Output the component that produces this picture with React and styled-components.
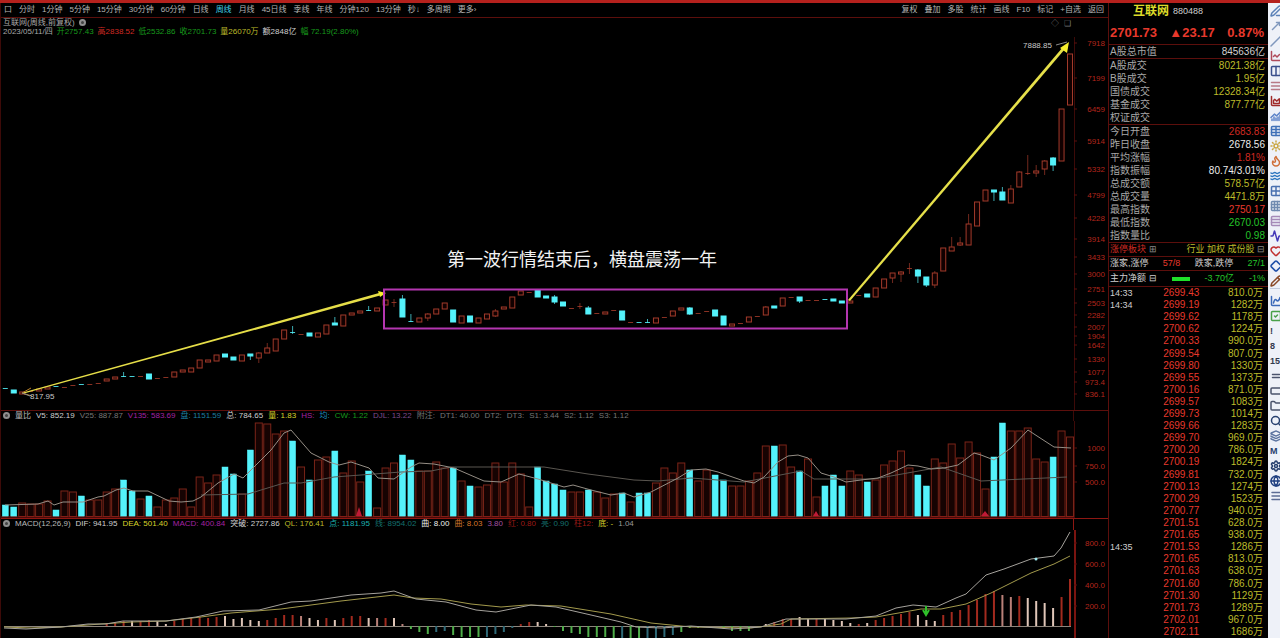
import styled, { createGlobalStyle } from "styled-components";
import {
  PenLine,
  MoveUpRight,
  Slash,
  ChartLine,
  Columns2,
  AlignJustify,
  ChartArea,
  ChartNoAxesCombined,
  Table,
  Sun,
  Flame,
  Waves,
  Grid2x2,
  Grid3x3,
  Rows3,
  Activity,
  Heart,
  Diamond,
  Pencil,
  ChartSpline,
  SquareCheck,
  Equal,
  RectangleHorizontal,
  Folder,
  Search,
  Layers,
  Settings,
  Globe,
  Menu,
} from "lucide-react";

const GlobalStyle = createGlobalStyle`
  * {
    box-sizing: border-box;
  }

  body {
    margin: 0;
    background-color: #000;
    font-family: "Liberation Sans", "Noto Sans CJK SC", sans-serif;
  }

  button {
    margin: 0;
    padding: 0;
    border: 0;
    background: none;
    font-family: inherit;
    cursor: pointer;
  }
`;

const RED = "#e8392c";
const GREEN = "#25c52a";
const YELLOW = "#bdbb2a";
const WHITE = "#cfcfcf";
const CYAN = "#54f2fb";
const BORDER = "#5c0f0c";

const Page = styled.div`
  display: grid;
  grid-template-columns: minmax(0, 1fr) 160px 12px;
  min-height: 100vh;
  background-color: #000;
  border-top: 3px solid #b5211d;
`;

const Main = styled.main`
  display: flex;
  flex-direction: column;
  min-width: 0;
  border-left: 1px solid #3d0a08;
`;

const Toolbar = styled.nav`
  display: flex;
  justify-content: space-between;
  height: 15px;
  padding: 0 4px 0 3px;
  border-bottom: 1px solid ${BORDER};
`;

const ToolGroup = styled.div`
  display: flex;
  align-items: center;
  gap: 7px;
`;

const ToolButton = styled.button`
  color: ${(props) => (props.$active ? "#3fd0ea" : "#b4b4b4")};
  font-size: 8px;
  line-height: 12px;
  white-space: nowrap;
`;

const Heading = styled.header`
  display: flex;
  justify-content: space-between;
  height: 19px;
  padding: 0 4px 0 2px;
`;

const HeadingText = styled.div`
  display: flex;
  flex-direction: column;
`;

const HeadingIcons = styled.div`
  display: flex;
  gap: 5px;
  padding: 1px 33px 0 0;
  color: #777;
  font-size: 8px;
  line-height: 9px;
`;

const InfoLine = styled.div`
  display: flex;
  align-items: center;
  gap: ${(props) => props.$gap || 4}px;
  height: 9px;
  font-size: 8px;
  line-height: 9px;
  white-space: nowrap;
`;

const Field = styled.span`
  color: ${(props) => props.$color || WHITE};
`;

const Dot = styled.span`
  width: 7px;
  height: 7px;
  border: 2px solid #8f8f8f;
  border-radius: 50%;
  background-color: #444;
`;

const PaneHeader = styled.div`
  display: grid;
  grid-template-columns: minmax(0, 1fr) 35px;
  height: ${(props) => (props.$strong ? 12 : 11)}px;
  border-top: 1px solid ${(props) => (props.$strong ? "#8e1712" : BORDER)};
`;

const PaneAxis = styled.div`
  border-left: 1px solid ${(props) => (props.$strong ? "#8e1712" : "#3d0a08")};
`;

const PaneInfo = styled(InfoLine)`
  padding-left: 2px;
  overflow: hidden;
`;

const Chart = styled.svg`
  display: block;
  width: 100%;
  height: auto;
`;

const AxisText = styled.text`
  fill: #b3261c;
  font-size: 8px;
  text-anchor: end;
`;

const MarkText = styled.text`
  fill: #c9c9c9;
  font-size: 8px;
`;

const NoteText = styled.text`
  fill: #f2f2f2;
  font-size: 18px;
`;

const Quote = styled.aside`
  display: flex;
  flex-direction: column;
  border-left: 1px solid ${BORDER};
`;

const QuoteTitle = styled.h1`
  display: flex;
  align-items: center;
  gap: 4px;
  height: 17px;
  margin: 0;
  padding-left: 24px;
  font-size: 12px;
  line-height: 17px;
  color: #dedb2a;
`;

const QuoteCode = styled.span`
  font-size: 9px;
  font-weight: normal;
  color: ${WHITE};
`;

const PriceRow = styled.div`
  display: flex;
  align-items: center;
  justify-content: space-between;
  height: 24px;
  padding: 0 4px 0 1px;
  font-size: 13px;
  font-weight: bold;
  color: ${RED};
`;

const StatList = styled.dl`
  margin: 0;
  border-top: 1px solid ${BORDER};
`;

const StatRow = styled.div`
  display: flex;
  align-items: center;
  justify-content: space-between;
  height: 13px;
  padding: 0 3px 0 1px;
  font-size: 10px;
  line-height: 13px;
  white-space: nowrap;
`;

const StatLabel = styled.dt`
  color: #a8a8a8;
`;

const StatValue = styled.dd`
  margin: 0;
  color: ${(props) => props.$color};
`;

const BandRow = styled.div`
  display: flex;
  align-items: center;
  justify-content: space-between;
  height: ${(props) => props.$height || 14}px;
  padding: 0 3px 0 1px;
  border-top: 1px solid ${BORDER};
  font-size: 9px;
  line-height: 13px;
  white-space: nowrap;
`;

const FlowBar = styled.span`
  width: 18px;
  height: 4px;
  background-color: #1fe02a;
`;

const TickTable = styled.table`
  flex: 1;
  display: grid;
  border-top: 1px solid ${BORDER};
`;

const TickBody = styled.tbody`
  display: grid;
  grid-auto-rows: 1fr;
`;

const TickRow = styled.tr`
  display: grid;
  grid-template-columns: 44px 1fr 1fr;
  align-items: center;
  padding: 0 5px 0 1px;
  font-size: 10px;
  line-height: 12px;
`;

const TickCell = styled.td`
  padding: 0;
  color: ${(props) => props.$color};
  text-align: ${(props) => props.$align || "left"};
`;

const TickTime = styled(TickCell)`
  font-size: 9px;
`;

const SideBar = styled.nav`
  display: flex;
  flex-direction: column;
  padding-left: 2px;
  background-color: #eef1f8;
  overflow: hidden;
`;

const SideButton = styled.button`
  display: flex;
  align-items: center;
  flex-shrink: 0;
  width: 14px;
  height: 15px;
  color: ${(props) => props.$color};
  font-size: 9px;
  font-weight: bold;
`;

const SideDivider = styled.hr`
  width: 100%;
  height: 5px;
  margin: 0;
  border: 0;
  border-top: 1px solid #c3cbdc;
`;

const periods = [
  "口", "分时", "1分钟", "5分钟", "15分钟", "30分钟", "60分钟", "日线", "周线",
  "月线", "45日线", "季线", "年线", "分钟120", "13分钟", "秒↓", "多周期", "更多›",
];

const tools = ["复权", "叠加", "多股", "统计", "画线", "F10", "标记", "+自选", "返回"];

const ohlc = [
  ["2023/05/11/四", "#a8a8a8"],
  ["开2757.43", "#179a1c"],
  ["高2838.52", "#cf2a22"],
  ["低2532.86", "#179a1c"],
  ["收2701.73", "#179a1c"],
  ["量26070万", YELLOW],
  ["额2848亿", WHITE],
  ["幅 72.19(2.80%)", "#179a1c"],
];

const volumeInfo = [
  ["量比", "#b8b8b8"],
  ["V5: 852.19", WHITE],
  ["V25: 887.87", "#777"],
  ["V135: 583.69", "#a322a3"],
  ["盘: 1151.59", "#1c7fa0"],
  ["总: 784.65", WHITE],
  ["量: 1.83", "#d6d32a"],
  ["HS:", "#a322a3"],
  ["均:", "#1c8fc0"],
  ["CW: 1.22", "#179a1c"],
  ["DJL: 13.22", "#7d4a8a"],
  ["附注:", "#777"],
  ["DT1: 40.00", "#777"],
  ["DT2:", "#777"],
  ["DT3:", "#777"],
  ["S1: 3.44", "#777"],
  ["S2: 1.12", "#777"],
  ["S3: 1.12", "#777"],
];

const macdInfo = [
  ["MACD(12,26,9)", "#b8b8b8"],
  ["DIF: 941.95", WHITE],
  ["DEA: 501.40", "#d6d32a"],
  ["MACD: 400.84", "#a322a3"],
  ["突破: 2727.86", WHITE],
  ["QL: 176.41", YELLOW],
  ["点: 1181.95", "#1bb2b2"],
  ["线: 8954.02", "#14706e"],
  ["曲: 8.00", "#f0f0f0"],
  ["曲: 8.03", "#d9772a"],
  ["3.80", "#a050a0"],
  ["红: 0.80", "#9c1a16"],
  ["亮: 0.90", "#14706e"],
  ["柱12:", "#9c1a16"],
  ["底: -", "#d6d32a"],
  ["1.04", "#999"],
];

// top edge of every volume bar, left to right
const volumeTops = [
  505, 507, 503, 504, 504, 501, 510, 491, 492, 496, 500, 500, 492, 489, 480, 491,
  499, 496, 507, 500, 498, 489, 507, 477, 483, 475, 467, 474, 494, 450, 423, 424,
  434, 431, 441, 467, 480, 460, 457, 451, 473, 461, 482, 471, 508, 468, 463, 455,
  460, 471, 471, 462, 468, 468, 481, 486, 487, 485, 463, 482, 463, 474, 507, 467,
  481, 484, 490, 492, 492, 490, 492, 498, 494, 493, 502, 493, 493, 483, 468, 473,
  463, 470, 481, 470, 475, 480, 486, 486, 481, 473, 446, 446, 445, 467, 471, 459,
  497, 486, 475, 486, 471, 475, 482, 480, 465, 461, 451, 468, 475, 486, 459, 463,
  444, 458, 442, 453, 489, 457, 423, 431, 431, 428, 459, 462, 457, 431, 437,
];

const volumeDown = [
  0, 1, 6, 9, 14, 15, 17, 26, 27, 29, 34, 36, 39, 43, 47, 48, 53, 55, 63, 64, 65, 66,
  69, 73, 75, 76, 81, 84, 85, 91, 94, 97, 98, 99, 102, 108, 109, 117, 118, 124,
];

// body top, body bottom, wick top, wick bottom, falling
const candles = [
  [388, 389, 0, 0, 1], [390, 393, 0, 0, 1], [392, 394], [391, 392], [389, 391],
  [387, 389], [386, 387, 0, 0, 1], [387, 388], [385, 386], [384, 385, 0, 0, 1],
  [384, 385], [383, 384], [379, 381], [377, 379], [376, 377, 372, 377, 1],
  [376, 377, 0, 0, 1], [376, 377], [374, 379, 0, 0, 1], [378, 379], [377, 378],
  [372, 377], [370, 372], [368, 372], [360, 368], [360, 362], [355, 361],
  [354, 357, 0, 0, 1], [357, 360, 0, 0, 1], [355, 361], [354, 356, 354, 360, 1],
  [353, 358, 352, 363], [348, 353, 343, 353], [339, 351], [330, 339],
  [332, 333, 326, 334, 1], [334, 335], [333, 336, 0, 0, 1], [333, 337], [325, 334],
  [323, 325, 317, 325, 1], [315, 326], [313, 315], [311, 313],
  [310, 311, 306, 311, 1], [308, 311], [300, 305], [302, 303, 299, 307],
  [299, 317, 295, 317, 1], [321, 322, 314, 322, 1], [318, 322], [314, 318, 313, 321],
  [309, 314], [303, 309], [310, 322, 0, 0, 1], [316, 323], [316, 322, 0, 0, 1],
  [318, 323], [314, 319], [311, 316, 309, 317], [307, 309], [297, 308], [291, 295],
  [292, 293], [290, 297, 0, 0, 1], [296, 298, 0, 0, 1], [297, 302, 295, 304, 1],
  [302, 306, 0, 0, 1], [308, 309], [306, 307, 303, 309], [308, 314, 306, 314, 1],
  [313, 314], [312, 314], [310, 311], [311, 320, 0, 0, 1], [322, 323],
  [322, 323, 0, 0, 1], [322, 323, 319, 323, 1], [318, 323], [317, 318], [311, 316],
  [308, 310], [308, 314, 307, 315, 1], [313, 314], [311, 312], [310, 316, 0, 0, 1],
  [316, 325, 0, 0, 1], [324, 326], [323, 324], [317, 322], [316, 317],
  [307, 315, 306, 315], [306, 308, 0, 0, 1], [298, 306], [297, 298],
  [297, 301, 297, 303, 1], [300, 301], [300, 301], [299, 300, 0, 0, 1],
  [299, 301, 0, 0, 1], [301, 303, 0, 0, 1], [301, 303], [295, 296],
  [294, 297, 0, 0, 1], [288, 297], [279, 288], [273, 278, 273, 283],
  [272, 274, 271, 282], [268, 269, 263, 274], [270, 276, 269, 283, 1],
  [277, 285, 277, 287, 1], [273, 285, 271, 288], [248, 271], [247, 251, 237, 251],
  [243, 245, 237, 246], [224, 245, 214, 245], [202, 226], [190, 201],
  [190, 192, 190, 201, 1], [192, 200, 187, 200, 1], [189, 203, 185, 203],
  [172, 187, 171, 187], [173, 174, 155, 175], [171, 173, 165, 177],
  [161, 169, 160, 175], [158, 165, 157, 171, 1], [109, 161], [54, 105],
];

// end of every histogram bar and its shade: r red, w white, p pink, g green, t teal
const histogram = [
  [12, 623, "r"], [13, 622, "r"], [14, 621, "r"], [15, 621, "w"], [16, 621, "r"],
  [17, 620, "r"], [18, 621, "w"], [19, 624, "w"], [20, 621, "r"], [21, 619, "r"],
  [22, 618, "r"], [23, 617, "r"], [24, 618, "r"], [25, 617, "r"], [26, 616, "w"],
  [27, 619, "w"], [28, 618, "w"], [29, 620, "w"], [30, 621, "w"], [31, 620, "r"],
  [32, 618, "r"], [33, 615, "r"], [34, 615, "r"], [35, 616, "p"], [36, 618, "w"],
  [37, 620, "w"], [38, 618, "r"], [39, 620, "w"], [40, 618, "r"], [41, 616, "r"],
  [42, 616, "r"], [43, 618, "w"], [44, 618, "p"], [45, 618, "r"], [46, 618, "w"],
  [47, 624, "p"], [48, 629, "g"], [49, 632, "g"], [50, 634, "g"], [51, 632, "t"],
  [52, 631, "t"], [53, 635, "g"], [54, 637, "g"], [55, 637, "g"], [56, 637, "g"],
  [57, 637, "t"], [58, 634, "t"], [59, 632, "t"], [60, 628, "t"], [61, 624, "r"],
  [62, 622, "r"], [63, 622, "w"], [64, 624, "w"], [65, 627, "g"], [66, 631, "g"],
  [67, 633, "g"], [68, 634, "g"], [69, 637, "g"], [70, 637, "g"], [71, 637, "g"],
  [72, 638, "g"], [73, 638, "t"], [74, 638, "g"], [75, 638, "g"], [76, 638, "t"],
  [77, 638, "t"], [78, 637, "t"], [79, 635, "t"], [80, 632, "g"], [81, 628, "g"],
  [82, 628, "g"], [85, 629, "g"], [86, 631, "g"], [87, 631, "g"], [88, 631, "g"],
  [90, 624, "w"], [91, 622, "r"], [92, 619, "r"], [93, 619, "r"], [94, 617, "w"],
  [95, 619, "w"], [96, 619, "r"], [97, 619, "w"], [98, 620, "w"], [99, 621, "w"],
  [100, 623, "w"], [101, 624, "r"], [102, 623, "w"], [103, 620, "r"], [104, 618, "r"],
  [105, 616, "r"], [106, 614, "r"], [107, 612, "r"], [108, 615, "w"], [109, 620, "w"],
  [110, 621, "w"], [111, 615, "r"], [112, 612, "r"], [113, 610, "r"], [114, 605, "r"],
  [115, 600, "r"], [116, 594, "r"], [117, 591, "r"], [118, 595, "p"], [119, 597, "p"],
  [120, 596, "r"], [121, 598, "w"], [122, 601, "w"], [123, 603, "w"], [124, 608, "w"],
  [125, 597, "r"], [126, 579, "r"],
];

const shades = { r: "#a32a1e", w: "#e0c6b8", p: "#b98078", g: "#4fae4a", t: "#2f6a78" };

const priceAxis = [
  [43, "7918"], [78, "7199"], [109, "6459"], [141, "5914"], [169, "5332"],
  [195, "4799"], [218, "4228"], [239, "3914"], [257, "3433"], [274, "3000"],
  [289, "2751"], [303, "2503"], [315, "2282"], [327, "2007"], [336, "1904"],
  [345, "1642"], [359, "1330"], [372, "1077"], [382, "973.4"], [394, "836.1"],
];

const turnover = [
  ["A股成交", "8021.38亿", YELLOW],
  ["B股成交", "1.95亿", YELLOW],
  ["国债成交", "12328.34亿", YELLOW],
  ["基金成交", "877.77亿", YELLOW],
  ["权证成交", "", YELLOW],
];

const indexStats = [
  ["今日开盘", "2683.83", "#cf2a22"],
  ["昨日收盘", "2678.56", "#ececec"],
  ["平均涨幅", "1.81%", "#cf2a22"],
  ["指数振幅", "80.74/3.01%", "#ececec"],
  ["总成交额", "578.57亿", YELLOW],
  ["总成交量", "4471.8万", YELLOW],
  ["最高指数", "2750.17", RED],
  ["最低指数", "2670.03", GREEN],
  ["指数量比", "0.98", GREEN],
];

const ticks = [
  ["14:33", "2699.43", "810.0万"], ["14:34", "2699.19", "1282万"],
  ["", "2699.62", "1178万"], ["", "2700.62", "1224万"], ["", "2700.33", "990.0万"],
  ["", "2699.54", "807.0万"], ["", "2699.80", "1330万"], ["", "2699.55", "1373万"],
  ["", "2700.16", "871.0万"], ["", "2699.57", "1083万"], ["", "2699.73", "1014万"],
  ["", "2699.66", "1283万"], ["", "2699.70", "969.0万"], ["", "2700.20", "786.0万"],
  ["", "2700.19", "1824万"], ["", "2699.81", "732.0万"], ["", "2700.13", "1274万"],
  ["", "2700.29", "1523万"], ["", "2700.77", "940.0万"], ["", "2701.51", "628.0万"],
  ["", "2701.65", "938.0万"], ["14:35", "2701.53", "1286万"], ["", "2701.65", "813.0万"],
  ["", "2701.63", "638.0万"], ["", "2701.60", "786.0万"], ["", "2701.30", "1129万"],
  ["", "2701.73", "1289万"], ["", "2702.01", "967.0万"], ["", "2702.11", "1686万"],
];

const drawTools = [
  ["画笔", PenLine, "#5b82b8"], ["箭头", MoveUpRight, "#7f97bd"],
  ["线段", Slash, "#7f97bd"], ["走势", ChartLine, "#b04a5a"],
  ["分栏", Columns2, "#3a4f8c"], ["平行线", AlignJustify, "#b77a86"],
  ["面积", ChartArea, "#a02a2a"], ["组合", ChartNoAxesCombined, "#5b82c8"],
  ["表格", Table, "#3f70b8"], ["标注", Sun, "#c9a640"], ["热点", Flame, "#d0703a"],
  ["波浪", Waves, "#2f78c0"], ["四格", Grid2x2, "#4a70b0"],
  ["网格", Grid3x3, "#6f8ab0"], ["分行", Rows3, "#a58ab8"],
  ["指标", Activity, "#4438b8"], ["收藏", Heart, "#c02f2f"],
  ["菱形", Diamond, "#1f4fa8"], ["铅笔", Pencil, "#8a4a28"],
];

const pageTools = [
  ["曲线", ChartSpline, "#3a68b8"], ["选中", SquareCheck, "#48a048"],
  ["提示", "!", "#333a4c"], ["八", "8", "#333a4c"], ["十五", "15", "#333a4c"],
  ["等分", Equal, "#4b546c"], ["矩形", RectangleHorizontal, "#4b546c"],
  ["目录", Folder, "#4b546c"], ["查找", Search, "#27406f"],
  ["图层", Layers, "#5c74a0"], ["命名", "M", "#27406f"],
  ["设置", Settings, "#27406f"], ["网络", Globe, "#1f3f80"], ["菜单", Menu, "#5c6c94"],
];

const barX = (index) => 4.3 + index * 8.45;

const Candle = ({ index, data }) => {
  const [top, bottom, high, low, falling] = data;
  const x = barX(index);
  const color = falling ? CYAN : "#a23a2a";
  const flat = bottom - top < 2;
  return (
    <g stroke={color} fill={falling ? CYAN : "#100"}>
      {high > 0 && <line x1={x} x2={x} y1={high} y2={low} opacity="0.7" />}
      {flat ? (
        <line x1={x - 2.5} x2={x + 2.5} y1={top + 0.5} y2={top + 0.5} opacity="0.85" />
      ) : (
        <rect x={x - 2.5} y={top} width="5" height={bottom - top} />
      )}
    </g>
  );
};

const Axis = ({ labels }) =>
  labels.map(([y, label]) => (
    <g key={y}>
      <line x1="1073" x2="1076" y1={y} y2={y} stroke={BORDER} />
      <AxisText x="1104" y={y + 3}>{label}</AxisText>
    </g>
  ));

const PriceChart = () => (
  <Chart viewBox="0 37 1107 373" role="img" aria-label="K线图">
    <line x1="1073.5" x2="1073.5" y1="37" y2="410" stroke="#3d0a08" />
    <Axis labels={priceAxis} />
    {candles.map((data, index) => (
      <Candle key={index} index={index} data={data} />
    ))}
    <polygon points="22,392.5 378,293 379,295.5 22,393.7" fill="#e6de48" />
    <polygon points="385,293 377,291 379,297" fill="#f6ee2e" />
    <path d="M30 388 L21 393 L31 396" stroke="#b9822c" fill="none" />
    <polygon points="847,300 1062,47 1064,49 849,301" fill="#e6e04a" />
    <polygon points="1068,42 1059,48 1066,53" fill="#f6ee2e" />
    <rect x="383" y="289.5" width="463" height="39" stroke="#b436b0" strokeWidth="2" fill="none" />
    <NoteText x="446" y="266">第一波行情结束后，横盘震荡一年</NoteText>
    <MarkText x="1022" y="48">7888.85</MarkText>
    <path d="M1055 45 L1066 42" stroke="#8a8a8a" />
    <MarkText x="29" y="399">817.95</MarkText>
    <path d="M21 393 L29 396" stroke="#8a8a8a" />
  </Chart>
);

const VolumeChart = () => (
  <Chart viewBox="0 421 1107 97" role="img" aria-label="成交量">
    <line x1="1073.5" x2="1073.5" y1="421" y2="518" stroke="#3d0a08" />
    <Axis labels={[[448, "1000"], [466, "750.0"], [482, "500.0"]]} />
    {volumeTops.map((top, index) => {
      const down = volumeDown.includes(index);
      return (
        <rect
          key={index}
          x={barX(index) - (down ? 3 : 3.5)}
          y={top}
          width={down ? 6 : 7}
          height={516.5 - top}
          fill={down ? CYAN : "#160302"}
          stroke={down ? CYAN : "#7a2418"}
          strokeWidth={down ? 0.5 : 1}
        />
      );
    })}
    <path
      d="M200 495 L247 494 L283 483 L300 483 L333 477 L400 472 L430 471 L450 467 L543 467 L587 474 L633 480 L657 481 L690 478 L743 482 L800 471 L813 479 L873 479 L940 467 L980 481 L1066 477"
      stroke="#5a5650"
      fill="none"
    />
    <path
      d="M4 505 L37 504 L47 501 L53 505 L62 502 L82 502 L97 497 L103 496 L115 490 L123 488 L132 491 L147 491 L168 501 L180 502 L192 501 L200 497 L217 483 L233 474 L242 478 L253 467 L270 450 L283 433 L290 430 L310 453 L328 462 L338 465 L350 462 L368 468 L377 478 L393 479 L410 467 L418 463 L433 464 L453 468 L483 481 L500 482 L518 474 L537 479 L550 483 L563 487 L572 485 L590 490 L610 495 L623 493 L633 497 L650 492 L677 478 L690 470 L705 469 L717 472 L743 481 L753 483 L763 477 L777 462 L787 456 L797 455 L807 458 L820 473 L833 477 L845 482 L860 480 L877 478 L890 473 L907 465 L917 466 L930 469 L943 468 L957 465 L973 453 L980 455 L993 460 L1010 448 L1027 430 L1033 434 L1053 447 L1070 448"
      stroke="#958e85"
      fill="none"
    />
    <path d="M355 516 L358 507 L361 516Z M812 516 L815 511 L818 516Z M980 516 L984 511 L988 516Z" fill="#c01a36" />
    <line x1="0" x2="1073" y1="517" y2="517" stroke="#8e1712" />
  </Chart>
);

const MacdChart = () => (
  <Chart viewBox="0 530 1107 108" role="img" aria-label="MACD">
    <line x1="1074" x2="1074" y1="530" y2="638" stroke="#7a1410" strokeWidth="2" />
    <Axis labels={[[543, "800.0"], [564, "600.0"], [585, "400.0"], [606, "200.0"]]} />
    <line x1="3" x2="1070" y1="626.5" y2="626.5" stroke="#8d857c" />
    {histogram.map(([index, end, shade]) => (
      <line
        key={index}
        x1={barX(index)}
        x2={barX(index)}
        y1="626"
        y2={end}
        stroke={shades[shade]}
        strokeWidth="2"
      />
    ))}
    <path
      d="M3 627 L30 628 L60 627 L100 624 L130 622 L165 621 L200 617 L230 613 L280 609 L340 601 L393 595 L412 598 L440 599 L470 604 L500 607 L525 605 L560 606 L610 614 L650 623 L690 627 L750 628 L780 624 L790 619 L850 618 L875 617 L920 609 L940 609 L965 604 L990 593 L1030 573 L1053 564 L1069 556"
      stroke="#a39a4c"
      fill="none"
    />
    <path
      d="M3 628 L25 629 L60 627 L87 624 L105 624 L122 621 L165 621 L195 617 L222 611 L258 610 L290 602 L310 601 L350 595 L380 593 L393 591 L415 599 L445 602 L475 610 L495 612 L510 609 L530 605 L555 607 L590 615 L620 622 L635 627 L660 628 L690 626 L730 629 L760 627 L785 619 L845 619 L875 616 L895 608 L912 605 L935 607 L955 598 L965 594 L985 575 L1003 569 L1030 559 L1053 556 L1060 548 L1069 532"
      stroke="#a5a29c"
      fill="none"
    />
    <path d="M925 606 V614 M922 610 L925 615 L928 610" stroke="#2fc02a" strokeWidth="2" fill="none" />
    <circle cx="1035" cy="559" r="1.5" fill="#9fe8ee" />
  </Chart>
);

const Fields = ({ items }) =>
  items.map(([text, color]) => (
    <Field key={text} $color={color}>{text}</Field>
  ));

const StatRows = ({ rows }) => (
  <StatList>
    {rows.map(([label, value, color]) => (
      <StatRow key={label}>
        <StatLabel>{label}</StatLabel>
        <StatValue $color={color}>{value}</StatValue>
      </StatRow>
    ))}
  </StatList>
);

const SideTools = ({ items }) =>
  items.map(([name, Icon, color]) => (
    <SideButton key={name} type="button" aria-label={name} $color={color}>
      {typeof Icon === "string" ? Icon : <Icon size={12} strokeWidth={3} />}
    </SideButton>
  ));

const App = () => {
  return (
    <>
      <GlobalStyle />
      <Page>
        <Main>
          <Toolbar>
            <ToolGroup>
              {periods.map((name) => (
                <ToolButton key={name} type="button" $active={name === "周线"}>
                  {name}
                </ToolButton>
              ))}
            </ToolGroup>
            <ToolGroup>
              {tools.map((name) => (
                <ToolButton key={name} type="button">{name}</ToolButton>
              ))}
            </ToolGroup>
          </Toolbar>
          <Heading>
            <HeadingText>
              <InfoLine>
                <Field $color="#a8a8a8">互联网(周线,前复权)</Field>
                <Dot />
              </InfoLine>
              <InfoLine>
                <Fields items={ohlc} />
              </InfoLine>
            </HeadingText>
            <HeadingIcons>
              <span>◇</span>
              <span>❏</span>
            </HeadingIcons>
          </Heading>
          <PriceChart />
          <PaneHeader>
            <PaneInfo $gap={5}>
              <Dot />
              <Fields items={volumeInfo} />
            </PaneInfo>
            <PaneAxis />
          </PaneHeader>
          <VolumeChart />
          <PaneHeader $strong>
            <PaneInfo $gap={5}>
              <Dot />
              <Fields items={macdInfo} />
            </PaneInfo>
            <PaneAxis $strong />
          </PaneHeader>
          <MacdChart />
        </Main>
        <Quote>
          <QuoteTitle>
            互联网 <QuoteCode>880488</QuoteCode>
          </QuoteTitle>
          <PriceRow>
            <span>2701.73</span>
            <span>▲23.17</span>
            <span>0.87%</span>
          </PriceRow>
          <StatRows rows={[["A股总市值", "845636亿", WHITE]]} />
          <StatRows rows={turnover} />
          <StatRows rows={indexStats} />
          <BandRow>
            <Field $color="#cf2a22">涨停板块 <Field $color="#888">⊞</Field></Field>
            <Field $color={YELLOW}>行业 加权 成份股 <Field $color="#888">⊟</Field></Field>
          </BandRow>
          <BandRow>
            <Field>涨家,涨停</Field>
            <Field $color={RED}>57/8</Field>
            <Field>跌家,跌停</Field>
            <Field $color={GREEN}>27/1</Field>
          </BandRow>
          <BandRow $height={16}>
            <Field>主力净额 ⊟</Field>
            <FlowBar />
            <Field $color={GREEN}>-3.70亿</Field>
            <Field $color={GREEN}>-1%</Field>
          </BandRow>
          <TickTable>
            <TickBody>
              {ticks.map(([time, price, volume], index) => (
                <TickRow key={index}>
                  <TickTime $color={WHITE}>{time}</TickTime>
                  <TickCell $color={RED} $align="center">{price}</TickCell>
                  <TickCell $color={YELLOW} $align="right">{volume}</TickCell>
                </TickRow>
              ))}
            </TickBody>
          </TickTable>
        </Quote>
        <SideBar>
          <SideTools items={drawTools} />
          <SideDivider />
          <SideTools items={pageTools} />
        </SideBar>
      </Page>
    </>
  );
};

export default App;
